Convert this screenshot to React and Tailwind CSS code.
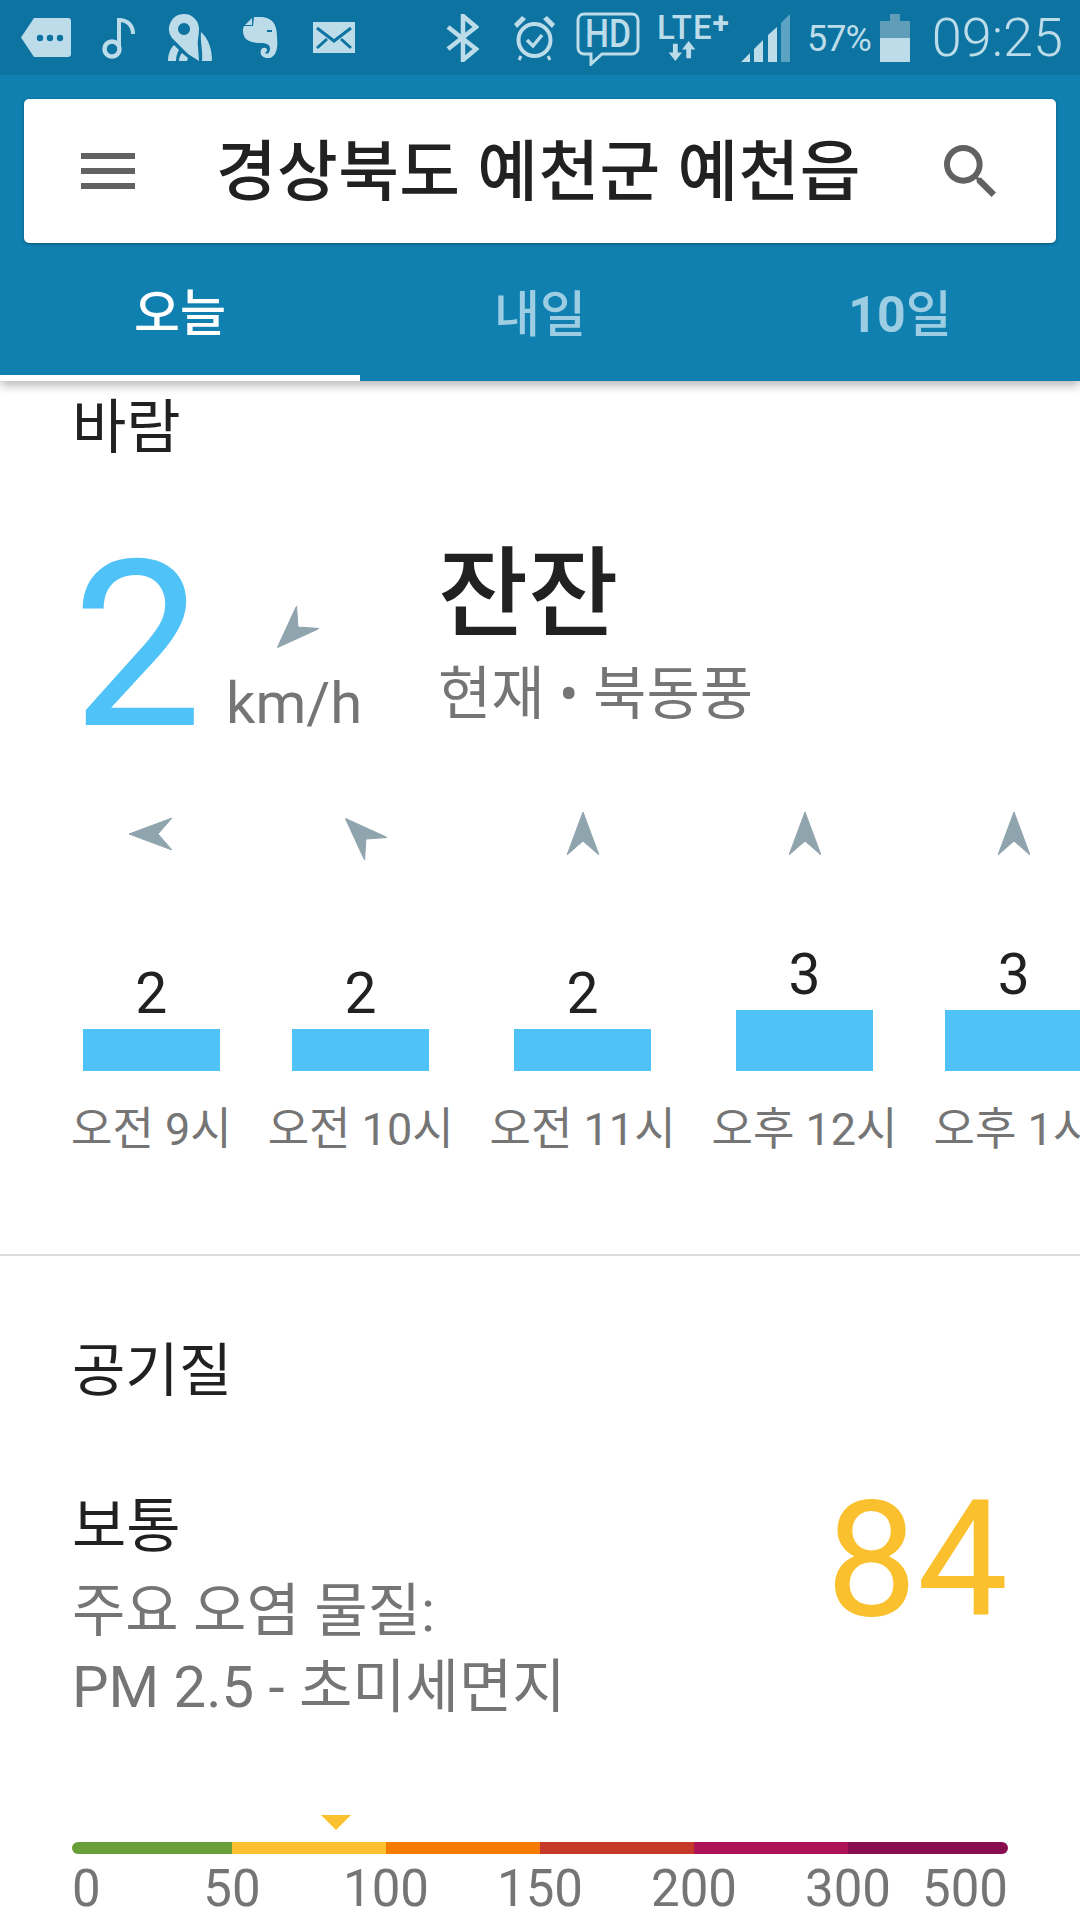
const hours = [
  { label: "오전 9시", value: 2, rotate: "-rotate-90" },
  { label: "오전 10시", value: 2, rotate: "-rotate-45" },
  { label: "오전 11시", value: 2, rotate: "rotate-0" },
  { label: "오후 12시", value: 3, rotate: "rotate-0" },
  { label: "오후 1시", value: 3, rotate: "rotate-0" },
];

const scale = [
  { color: "bg-[#689f38]", width: "w-[160px]", left: "0", right: "50" },
  { color: "bg-[#fbc02d]", width: "w-[154px]", right: "100" },
  { color: "bg-[#f57c00]", width: "w-[154px]", right: "150" },
  { color: "bg-[#c53929]", width: "w-[154px]", right: "200" },
  { color: "bg-[#ad1457]", width: "w-[154px]", right: "300" },
  { color: "bg-[#880e4f]", width: "w-[160px]" },
];

function WindArrow({ className = "" }) {
  return (
    <svg width="32" height="44" viewBox="0 0 32 44" className={className}>
      <path d="M16 0L32 43L16 29L0 43Z" fill="#90a4ae" stroke="#90a4ae" strokeWidth="1" strokeLinejoin="round" />
    </svg>
  );
}

function StatusIcons() {
  const c = "#bcdcea";
  const bg = "#0d73a0";
  return (
    <>
      <svg width="50" height="39" viewBox="0 0 50 39" className="ml-[21px]">
        <path d="M13 0H47a3 3 0 0 1 3 3V36a3 3 0 0 1-3 3H13L0 19.5Z" fill={c} />
        <circle cx="19" cy="20" r="3.2" fill={bg} />
        <circle cx="29" cy="20" r="3.2" fill={bg} />
        <circle cx="39" cy="20" r="3.2" fill={bg} />
      </svg>
      <svg width="33" height="42" viewBox="0 0 33 42" className="ml-[31px]">
        <circle cx="10" cy="32" r="7.5" fill="none" stroke={c} strokeWidth="4.5" />
        <path d="M17 32V3C26 3 31 9 31 17" fill="none" stroke={c} strokeWidth="4" />
      </svg>
      <svg width="44" height="47" viewBox="0 0 44 47" className="ml-[33px]">
        <path fillRule="evenodd" d="M16 0A15 15 0 0 1 31 15C31 22 29 27 30 33L31 47L20 40L4 24A15 15 0 0 1 16 0ZM16 9A6 6 0 1 0 16.01 9Z" fill={c} />
        <path d="M33 18C40 24 44 34 44 47H34C35 36 32 28 33 18Z" fill={c} />
        <path d="M0 47C0 40 2 35 6 31L11 36C9 39 8 43 8 47ZM11 47C11 44 12 41 14 39L20 44L19 47Z" fill={c} />
      </svg>
      <svg width="35" height="41" viewBox="0 0 35 41" className="ml-[31px]">
        <path d="M9 1V8H2Z" fill={c} />
        <path d="M11 0C14 -1 22 0 26 2C31 4 34 10 34 20C35 30 34 38 27 41C21 42 16 38 18 33C19 30 24 30 24 33C24 35 22 35 22 36C25 38 27 35 27 31C27 27 22 26 18 26C11 26 7 25 3 22C0 19 -1 13 1 9H10Z" fill={c} />
        <rect x="24" y="13" width="5" height="2" fill={bg} />
      </svg>
      <svg width="42" height="31" viewBox="0 0 42 31" className="ml-[35px]">
        <rect width="42" height="31" fill={c} />
        <path d="M4 6L21 19L38 6M4 26L14 17M38 26L28 17" fill="none" stroke={bg} strokeWidth="3" />
      </svg>
      <svg width="33" height="48" viewBox="0 0 33 48" className="ml-[91px]">
        <path d="M2 13L30 35L17 46V2L30 13L2 35" fill="none" stroke={c} strokeWidth="4.5" />
      </svg>
      <svg width="45" height="47" viewBox="0 0 45 47" className="ml-[33px]">
        <circle cx="22.5" cy="26" r="16" fill="none" stroke={c} strokeWidth="4" />
        <path d="M2 10L10 2L14 5L5 14ZM43 10L35 2L31 5L40 14Z" fill={c} />
        <path d="M15 26L21 32L30 21" fill="none" stroke={c} strokeWidth="3.5" />
        <path d="M9 42L7 46M36 42L38 46" stroke={c} strokeWidth="3" />
      </svg>
      <svg width="64" height="54" viewBox="0 0 64 54" className="ml-[19px] mt-[3px]">
        <path d="M8 2H56a6 6 0 0 1 6 6V36a6 6 0 0 1-6 6H26L15 52V42H8a6 6 0 0 1-6-6V8a6 6 0 0 1 6-6Z" fill="none" stroke={c} strokeWidth="3" />
        <text x="32" y="35" textAnchor="middle" fontSize="38" fontWeight="500" fill={c} fontFamily="Roboto" textLength="46" lengthAdjust="spacingAndGlyphs">HD</text>
      </svg>
      <div className="ml-[18px] w-[71px] h-[47px] flex flex-col items-center">
        <div className="text-[33px] leading-[27px] font-medium tracking-[1px] text-[#bcdcea] flex">
          LTE<span className="text-[30px] leading-[18px] font-bold">+</span>
        </div>
        <svg width="28" height="21" viewBox="0 0 28 21" className="self-start ml-[10px]">
          <path d="M7 21L0 12H4.5V3H9.5V12H14ZM21 0L28 9H23.5V18H18.5V9H14Z" fill={c} />
        </svg>
      </div>
      <svg width="49" height="48" viewBox="0 0 49 48" className="ml-[12px]">
        <path d="M0 48L9 39V48ZM13 48V35L22 26V48ZM27 48V21L36 13V48Z" fill={c} />
        <path d="M40 48V9L49 0V48Z" fill={c} opacity="0.45" />
      </svg>
      <span className="ml-[17px] mt-[2px] text-[36px] leading-none tracking-[-1px] text-[#bcdcea]">57%</span>
      <div className="ml-[9px] w-[30px] h-[48px] flex flex-col items-center">
        <div className="w-[10px] h-[7px] bg-[#5f9db9]" />
        <div className="w-[30px] h-[17px] bg-[#5f9db9]" />
        <div className="w-[30px] h-[24px] bg-[#bcdcea]" />
      </div>
      <span className="ml-[22px] text-[54px] leading-none font-light text-[#bcdcea]">09:25</span>
    </>
  );
}

export default function App() {
  return (
    <div className="w-[1080px] h-[1920px] overflow-hidden bg-white font-['Roboto','Noto_Sans_CJK_KR',sans-serif]">
      <header className="relative z-10 bg-[#0f80b0] shadow-[0_4px_10px_rgba(0,0,0,0.3)]">
        <div className="h-[75px] bg-[#0d73a0] flex items-center">
          <StatusIcons />
        </div>
        <div className="px-[24px] pt-[24px]">
          <div className="h-[144px] bg-white rounded-[5px] shadow-[0_1px_3px_rgba(0,0,0,0.35)] flex items-center">
            <svg width="54" height="36" viewBox="0 0 54 36" className="ml-[57px]">
              <path d="M0 0H54V6H0ZM0 15H54V21H0ZM0 30H54V36H0Z" fill="#616161" />
            </svg>
            <span className="ml-[81px] mt-[4px] w-[639px] text-[66px] leading-none font-medium tracking-[0.4px] text-[#212121] whitespace-nowrap">
              경상북도 예천군 예천읍
            </span>
            <svg width="52" height="52" viewBox="3 3 17.5 17.5" className="ml-[89px]">
              <path d="M15.5 14h-.79l-.28-.27A6.471 6.471 0 0 0 16 9.5 6.5 6.5 0 1 0 9.5 16c1.61 0 3.09-.59 4.23-1.57l.27.28v.79l5 4.99L20.49 19l-4.99-5zm-6 0C7.01 14 5 11.99 5 9.5S7.01 5 9.5 5 14 7.01 14 9.5 11.99 14 9.5 14z" fill="#616161" />
            </svg>
          </div>
        </div>
        <nav className="h-[138px] grid grid-cols-3 text-[50px] font-medium">
          <div className="flex items-center justify-center border-b-[6px] border-white text-white pt-[10px]">오늘</div>
          <div className="flex items-center justify-center text-[#9ccde3] pt-[6px]">내일</div>
          <div className="flex items-center justify-center text-[#9ccde3] pt-[6px]">
            <span className="font-bold">10</span>일
          </div>
        </nav>
      </header>

      <section className="pl-[72px] pt-[20px] border-b-2 border-[#dddddd] h-[875px]">
        <h2 className="text-[59px] leading-[54px] text-[#212121]">바람</h2>

        <div className="flex mt-[84px]">
          <div className="text-[232px] leading-[215px] text-[#4fc3f7] w-[155px]">2</div>
          <div className="flex flex-col w-[211px]">
            <WindArrow className="ml-[50px] mt-[71px] -rotate-[135deg]" />
            <span className="text-[58px] leading-[66px] -ml-[1px] text-[#757575] mt-[16px]">km/h</span>
          </div>
          <div className="flex flex-col">
            <span className="text-[98px] leading-[106px] mt-[3px] font-medium text-[#212121]">잔잔</span>
            <span className="text-[58px] leading-[62px] text-[#757575] mt-[15px]">현재 • 북동풍</span>
          </div>
        </div>

        <div className="flex gap-[36px] -ml-[1px] mt-[58px]">
          {hours.map((h) => (
            <div key={h.label} className="flex flex-col items-center shrink-0">
              <WindArrow className={h.rotate} />
              <div className="h-[215px] flex flex-col justify-end items-center">
                <span className="text-[57px] leading-[60px] pb-[5px] text-[#212121]">{h.value}</span>
                <div className={`w-[137px] bg-[#4fc3f7] ${h.value === 3 ? "h-[61px]" : "h-[42px]"}`} />
              </div>
              <span className="mt-[34px] text-[45px] leading-[50px] text-[#757575] whitespace-nowrap">{h.label}</span>
            </div>
          ))}
        </div>
      </section>

      <section className="px-[72px] pt-[85px]">
        <h2 className="text-[58px] leading-[60px] text-[#212121]">공기질</h2>
        <div className="flex justify-between mt-[96px]">
          <div className="flex flex-col">
            <span className="text-[59px] leading-[60px] text-[#212121]">보통</span>
            <span className="mt-[16px] text-[58px] leading-[76px] text-[#757575]">주요 오염 물질:</span>
            <span className="text-[58px] leading-[76px] text-[#757575]">PM 2.5 - 초미세면지</span>
          </div>
          <span className="text-[162px] leading-[160px] text-[#fbc02d] -mt-[17px]">84</span>
        </div>

        <svg width="30" height="15" viewBox="0 0 30 15" className="ml-[249px] mt-[90px]">
          <path d="M0 0H30L15 15Z" fill="#fbc02d" />
        </svg>
        <div className="flex w-[936px] h-[12px] mt-[12px] rounded-full overflow-hidden">
          {scale.map((s) => (
            <div key={s.color} className={`${s.color} ${s.width}`} />
          ))}
        </div>
        <div className="flex w-[936px] mt-[8px] text-[51px] leading-[54px] text-[#757575]">
          {scale.slice(0, 5).map((s) => (
            <div key={s.color} className={`${s.width} flex justify-between`}>
              <span>{s.left}</span>
              <span className="translate-x-1/2">{s.right}</span>
            </div>
          ))}
          <div className="w-[160px] text-right">500</div>
        </div>
      </section>
    </div>
  );
}
